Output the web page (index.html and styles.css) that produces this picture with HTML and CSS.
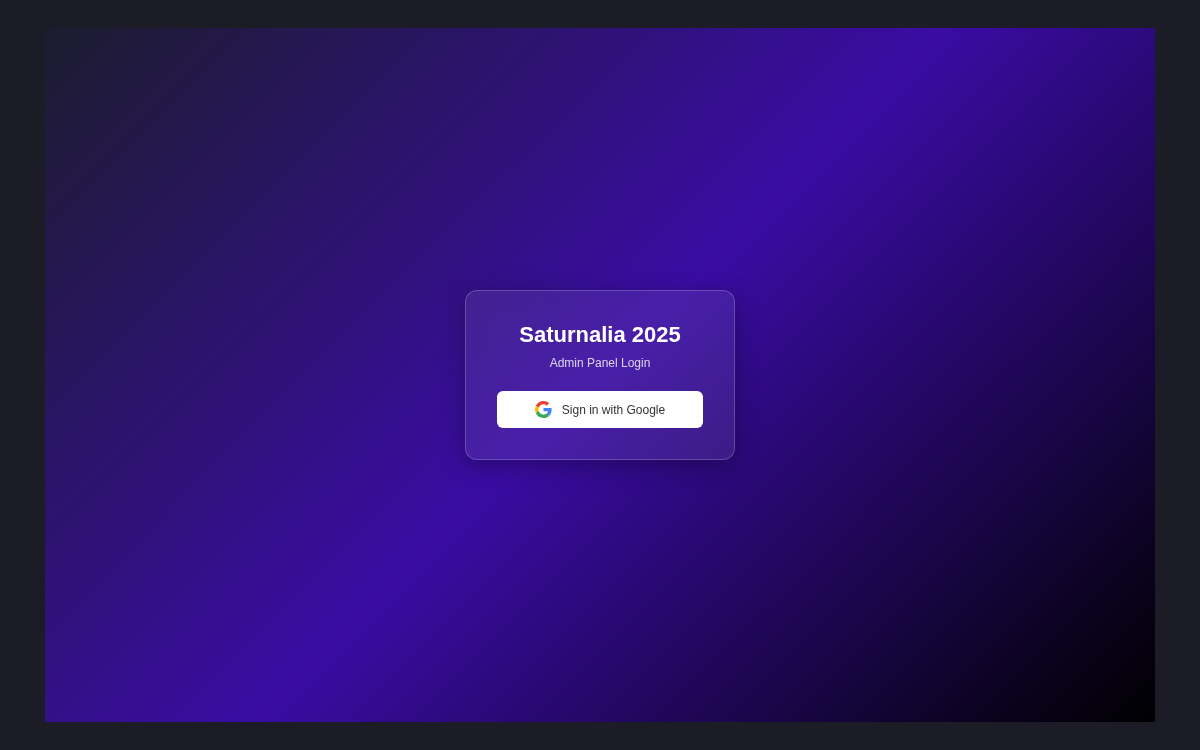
FILE: index.html
```html
<!DOCTYPE html>
<html lang="en">
<head>
    <meta charset="UTF-8">
    <meta name="viewport" content="width=device-width, initial-scale=1.0">
    <title>Saturnalia 2025 - Admin Panel Login</title>
    <link rel="stylesheet" href="styles.css">
</head>
<body>
    <main class="login-page">
        <div class="login-card">
            <h1>Saturnalia 2025</h1>
            <p>Admin Panel Login</p>
            <button type="button" class="google-btn">
                <svg class="google-icon" viewBox="0 0 48 48" aria-hidden="true">
                    <path fill="#EA4335" d="M24 9.5c3.54 0 6.71 1.22 9.21 3.6l6.85-6.85C35.9 2.38 30.47 0 24 0 14.62 0 6.51 5.38 2.56 13.22l7.98 6.19C12.43 13.72 17.74 9.5 24 9.5z"/>
                    <path fill="#4285F4" d="M46.98 24.55c0-1.57-.15-3.09-.38-4.55H24v9.02h12.94c-.58 2.96-2.26 5.48-4.78 7.18l7.73 6c4.51-4.18 7.09-10.36 7.09-17.65z"/>
                    <path fill="#FBBC05" d="M10.53 28.59c-.48-1.45-.76-2.99-.76-4.59s.27-3.14.76-4.59l-7.98-6.19C.92 16.46 0 20.12 0 24c0 3.88.92 7.54 2.56 10.78l7.97-6.19z"/>
                    <path fill="#34A853" d="M24 48c6.48 0 11.93-2.13 15.89-5.81l-7.73-6c-2.15 1.45-4.92 2.3-8.16 2.3-6.26 0-11.57-4.22-13.47-9.91l-7.98 6.19C6.51 42.62 14.62 48 24 48z"/>
                </svg>
                Sign in with Google
            </button>
        </div>
    </main>
</body>
</html>
```
FILE: styles.css
```css
* {
    box-sizing: border-box;
}
body {
    margin: 0;
    min-height: 100vh;
    display: flex;
    padding: 28px 45px;
    background-color: #1c1c27;
    font-family: "Liberation Sans", Arial, sans-serif;
}
.login-page {
    flex: 1;
    display: flex;
    justify-content: center;
    align-items: center;
    background: linear-gradient(135deg, #1c1c2e, #3a0ca3, #000000);
}
.login-card {
    padding: 31px;
    text-align: center;
    color: #ffffff;
    background: rgba(255, 255, 255, 0.08);
    border: 1px solid rgba(255, 255, 255, 0.2);
    border-radius: 12px;
    box-shadow: 0 6px 24px rgba(0, 0, 0, 0.3);
    backdrop-filter: blur(10px);
}
h1 {
    margin: 0 0 8px;
    font-size: 22px;
    line-height: 26px;
}
p {
    margin: 0 0 21px;
    font-size: 12px;
    line-height: 14px;
    color: rgba(255, 255, 255, 0.8);
}
.google-btn {
    display: flex;
    justify-content: center;
    align-items: center;
    gap: 10px;
    width: 206px;
    height: 37px;
    border: none;
    border-radius: 6px;
    background-color: #ffffff;
    color: #333333;
    font-family: inherit;
    font-size: 12px;
    cursor: pointer;
}
.google-icon {
    width: 17px;
    height: 17px;
}
```
